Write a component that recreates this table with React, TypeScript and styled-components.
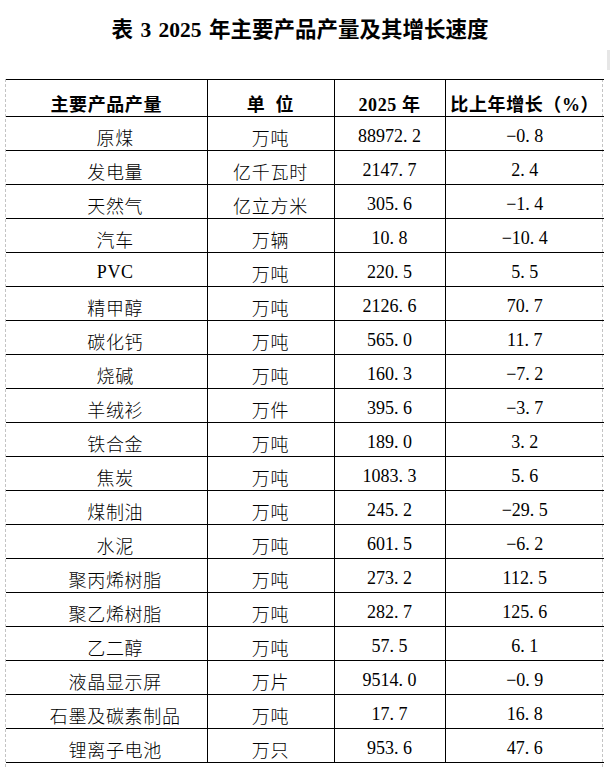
import * as React from 'react';
import styled, { createGlobalStyle } from 'styled-components';

const GlobalStyle = createGlobalStyle`
  html, body {
    margin: 0;
    padding: 0;
    background: #fff;
  }
  body {
    font-family: "Liberation Serif", "Noto Sans CJK SC", serif;
    color: #000;
  }
`;

const Page = styled.div`
  position: relative;
  width: 610px;
  height: 767px;
  overflow: hidden;
`;

const Title = styled.h1`
  margin: 0;
  padding: 17px 10px 0 0;
  height: 79px;
  box-sizing: border-box;
  text-align: center;
  font-size: 21.5px;
  line-height: 26px;
  font-weight: 700;
  word-spacing: 2px;
`;

const Sheet = styled.div`
  margin-left: 5px;
  width: 598px;
  height: 688px;
  box-sizing: border-box;
  border-left: 1px dashed #c4c4c4;
  border-right: 1px dashed #c4c4c4;
`;

const Table = styled.table`
  width: 100%;
  border-collapse: collapse;
  table-layout: fixed;
`;

const HeadCell = styled.th<{ $w: number; $spaced?: boolean }>`
  width: ${(p) => p.$w}px;
  height: 37px;
  box-sizing: border-box;
  padding: 9px 0 0;
  border-top: 1px solid #000;
  border-bottom: 1px solid #000;
  border-left: 1px solid #000;
  font-size: 18px;
  font-weight: 700;
  letter-spacing: 0.6px;
  word-spacing: ${(p) => (p.$spaced ? 5 : 0)}px;
  text-align: center;
  vertical-align: middle;
  &:first-child {
    border-left: none;
  }
`;

const Cell = styled.td<{ $indent?: number }>`
  height: 34px;
  box-sizing: border-box;
  padding: 6px 0 0 ${(p) => p.$indent || 0}px;
  border-bottom: 1px solid #000;
  border-left: 1px solid #000;
  font-size: 18px;
  font-weight: 300;
  letter-spacing: 0.7px;
  text-align: center;
  vertical-align: middle;
  white-space: nowrap;
  &:first-child {
    border-left: none;
  }
`;

const Figure = styled.span`
  font-family: "Liberation Serif", serif;
  font-size: 18px;
  letter-spacing: 0;
`;

const Dot = styled.span`
  display: inline-block;
  width: 9px;
  text-align: left;
`;

const ScrollNub = styled.div`
  position: absolute;
  right: 0;
  top: 50px;
  width: 3px;
  height: 20px;
  background: #e6e6e6;
`;

const rows: [string, string, string, string][] = [
  ['原煤', '万吨', '88972.2', '-0.8'],
  ['发电量', '亿千瓦时', '2147.7', '2.4'],
  ['天然气', '亿立方米', '305.6', '-1.4'],
  ['汽车', '万辆', '10.8', '-10.4'],
  ['PVC', '万吨', '220.5', '5.5'],
  ['精甲醇', '万吨', '2126.6', '70.7'],
  ['碳化钙', '万吨', '565.0', '11.7'],
  ['烧碱', '万吨', '160.3', '-7.2'],
  ['羊绒衫', '万件', '395.6', '-3.7'],
  ['铁合金', '万吨', '189.0', '3.2'],
  ['焦炭', '万吨', '1083.3', '5.6'],
  ['煤制油', '万吨', '245.2', '-29.5'],
  ['水泥', '万吨', '601.5', '-6.2'],
  ['聚丙烯树脂', '万吨', '273.2', '112.5'],
  ['聚乙烯树脂', '万吨', '282.7', '125.6'],
  ['乙二醇', '万吨', '57.5', '6.1'],
  ['液晶显示屏', '万片', '9514.0', '-0.9'],
  ['石墨及碳素制品', '万吨', '17.7', '16.8'],
  ['锂离子电池', '万只', '953.6', '47.6'],
];

const Num: React.FC<{ value: string }> = ({ value }) => {
  const [whole, frac] = value.replace('-', '\u2212').split('.');
  return (
    <Figure>
      {whole}
      <Dot>.</Dot>
      {frac}
    </Figure>
  );
};

const App: React.FC = () => (
  <Page>
    <GlobalStyle />
    <Title>表 3 2025 年主要产品产量及其增长速度</Title>
    <Sheet>
      <Table>
        <thead>
          <tr>
            <HeadCell $w={201}>主要产品产量</HeadCell>
            <HeadCell $w={127} $spaced>
              单 位
            </HeadCell>
            <HeadCell $w={111}>2025 年</HeadCell>
            <HeadCell $w={159}>比上年增长（%）</HeadCell>
          </tr>
        </thead>
        <tbody>
          {rows.map(([name, unit, output, growth]) => (
            <tr key={name}>
              <Cell $indent={18}>{name}</Cell>
              <Cell>{unit}</Cell>
              <Cell>
                <Num value={output} />
              </Cell>
              <Cell>
                <Num value={growth} />
              </Cell>
            </tr>
          ))}
        </tbody>
      </Table>
    </Sheet>
    <ScrollNub />
  </Page>
);

export default App;
